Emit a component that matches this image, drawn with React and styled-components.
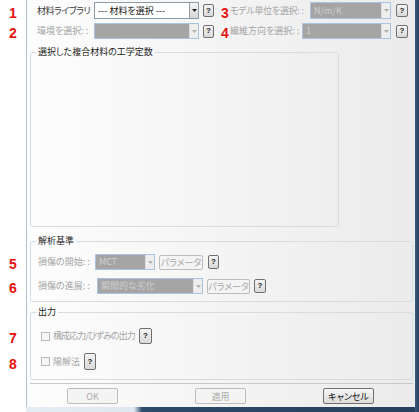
import styled, { createGlobalStyle } from "styled-components"

const EstiloGlobal = createGlobalStyle`
  html, body {
    margin: 0;
    padding: 0;
    background: #ffffff;
  }
  body {
    width: 419px;
    height: 412px;
    overflow: hidden;
    font-family: "Noto Sans CJK JP", "Noto Sans", sans-serif;
    font-size: 9px;
    font-feature-settings: "palt";
    color: #1e1e1e;
  }
`

const Tela = styled.div`
  display: flex;
  width: 419px;
  height: 412px;
`
// Margem branca onde ficam os números vermelhos
const Margem = styled.div`
  flex: none;
  width: 26px;
  background: #ffffff;
`
const Janela = styled.div`
  flex: none;
  width: 389px;
  display: flex;
  flex-direction: column;
`
const Dialogo = styled.div`
  flex: 1;
  display: flex;
  flex-direction: column;
  border-left: 1px solid #b4c3d2;
  background: linear-gradient(to right, #fdfdfd, #ebebeb);
`
const BordaInferior = styled.div`
  height: 5px;
  background: linear-gradient(to right, #e4ecf4 0, #dfe8f1 108px, #2d4a6b 116px, #27405e 100%);
`
const BordaDireita = styled.div`
  flex: none;
  width: 4px;
  background: linear-gradient(to right, #3b5a7e, #27405e);
`

// Linhas do topo e dos grupos
const Linha = styled.div`
  position: relative;
  display: flex;
  align-items: center;
  height: ${p => p.$altura || 17}px;
  margin-top: ${p => p.$mt || 0}px;
  padding-left: ${p => p.$pl || 0}px;
  padding-right: ${p => p.$pr || 0}px;
`
const Marcador = styled.span`
  color: #e8110f;
  font-family: "Liberation Sans", Arial, sans-serif;
  font-weight: bold;
  font-size: 14px;
  line-height: 14px;
  ${p => p.$fora
    ? `position: absolute; left: ${p.$left}px; top: 50%; transform: translateY(-50%); margin-top: 2px;`
    : `margin-left: ${p.$ml || 0}px; margin-top: 4px; width: 8px;`}
`
const Rotulo = styled.span`
  flex: ${p => (p.$flex ? 1 : "none")};
  width: ${p => (p.$largura ? `${p.$largura}px` : "auto")};
  margin-left: ${p => p.$ml || 0}px;
  letter-spacing: ${p => p.$espaco || 0}px;
  color: ${p => (p.$desabilitado ? "#a4a4a4" : "#3a3a3a")};
  white-space: nowrap;
  overflow: hidden;
  line-height: 12px;
`
const Combo = styled.div`
  flex: none;
  display: flex;
  box-sizing: border-box;
  width: ${p => p.$largura}px;
  height: ${p => p.$altura || 17}px;
  border: 1px solid ${p => (p.$desabilitado ? "#a9c4e2" : "#8e9aa6")};
  background: ${p => (p.$desabilitado ? "#a5a5a5" : "#ffffff")};
`
const TextoCombo = styled.span`
  flex: 1;
  padding-left: 3px;
  line-height: ${p => (p.$altura || 17) - 2}px;
  white-space: nowrap;
  overflow: hidden;
  color: ${p => (p.$desabilitado ? "#cfcfcf" : "#1a1a1a")};
`
const Seta = styled.span`
  flex: none;
  width: 8px;
  display: flex;
  align-items: center;
  justify-content: center;
  border-left: 1px solid ${p => (p.$desabilitado ? "#d8dde2" : "#9a9a9a")};
  background: ${p => (p.$desabilitado ? "#eeeeee" : "linear-gradient(#f4f4f4, #d6d6d6)")};
`
const Ajuda = styled.button`
  flex: none;
  box-sizing: border-box;
  width: ${p => p.$largura || 11}px;
  height: ${p => p.$altura || 14}px;
  margin: 0 0 0 ${p => p.$ml || 0}px;
  padding: 0;
  border: 1px solid #707070;
  border-radius: 2px;
  background: linear-gradient(#f4f4f4, #d9d9d9);
  font-family: "Liberation Sans", Arial, sans-serif;
  font-weight: bold;
  font-size: 8px;
  color: #222;
  line-height: 1;
`
const Botao = styled.button`
  flex: none;
  box-sizing: border-box;
  width: ${p => p.$largura || 51}px;
  height: ${p => p.$altura || 16}px;
  margin: 0 0 0 ${p => p.$ml || 0}px;
  padding: 0;
  border: 1px solid ${p => (p.$desabilitado ? "#bdbdbd" : "#707070")};
  border-radius: 2px;
  background: ${p => (p.$desabilitado ? "#f4f4f4" : "linear-gradient(#f6f6f6, #dcdcdc)")};
  color: ${p => (p.$desabilitado ? "#a9a9a9" : "#111")};
  font-family: "Noto Sans CJK JP", "Noto Sans", sans-serif;
  font-feature-settings: "palt";
  font-size: 9px;
  line-height: 1;
  white-space: nowrap;
  overflow: hidden;
`

// Caixas de grupo
const Grupo = styled.fieldset`
  box-sizing: border-box;
  width: ${p => p.$largura}px;
  height: ${p => p.$altura}px;
  margin: ${p => p.$mt}px 0 0 3px;
  padding: ${p => p.$pt || 0}px 0 0 7px;
  border: 1px solid #d5dde4;
  border-radius: 3px;
`
const Titulo = styled.legend`
  margin-left: -2px;
  padding: 0 2px;
  line-height: 12px;
  color: #1e1e1e;
`
const Caixa = styled.span`
  flex: none;
  box-sizing: border-box;
  width: 9px;
  height: 9px;
  margin-left: 3px;
  border: 1px solid #b9b9b9;
  background: #f5f5f5;
`
const Separador = styled.div`
  height: 1px;
  margin: 3px 2px 0 3px;
  background: #c8c8c8;
`
const Rodape = styled.div`
  display: flex;
  gap: 77px;
  margin-top: 4px;
  padding-left: 40px;
`

function SetaCombo({ desabilitado }) {
  return (
    <Seta $desabilitado={desabilitado}>
      <svg width="5" height="3" viewBox="0 0 5 3">
        <path d="M0 0h5L2.5 3z" fill={desabilitado ? "#b0b0b0" : "#222"} />
      </svg>
    </Seta>
  )
}

function CaixaCombo({ texto, largura, altura, desabilitado }) {
  return (
    <Combo $largura={largura} $altura={altura} $desabilitado={desabilitado}>
      <TextoCombo $altura={altura} $desabilitado={desabilitado}>{texto}</TextoCombo>
      <SetaCombo desabilitado={desabilitado} />
    </Combo>
  )
}

export default function App() {
  return (
    <Tela>
      <EstiloGlobal />
      <Margem />
      <Janela>
        <Dialogo>
          <Linha $mt={2} $pl={10} $pr={7}>
            <Marcador $fora $left={-18}>1</Marcador>
            <Rotulo $largura={57} $espaco={-0.5}>材料ライブラリ</Rotulo>
            <CaixaCombo texto="--- 材料を選択 ---" largura={105} />
            <Ajuda $ml={4} $altura={13}>?</Ajuda>
            <Marcador $ml={7}>3</Marcador>
            <Rotulo $flex $desabilitado $ml={1} $espaco={-0.3}>モデル単位を選択: :</Rotulo>
            <CaixaCombo texto="N/m/K" largura={81} desabilitado />
            <Ajuda $ml={5} $largura={12} $altura={13}>?</Ajuda>
          </Linha>
          <Linha $mt={4} $altura={16} $pl={10} $pr={7}>
            <Marcador $fora $left={-18}>2</Marcador>
            <Rotulo $largura={57} $desabilitado>環境を選択: :</Rotulo>
            <CaixaCombo texto="" largura={105} altura={16} desabilitado />
            <Ajuda $ml={4} $altura={13}>?</Ajuda>
            <Marcador $ml={7}>4</Marcador>
            <Rotulo $flex $desabilitado $ml={1}>繊維方向を選択: :</Rotulo>
            <CaixaCombo texto="1" largura={89} altura={16} desabilitado />
            <Ajuda $ml={5} $largura={12} $altura={13}>?</Ajuda>
          </Linha>

          <Grupo $largura={309} $altura={181} $mt={7}>
            <Titulo>選択した複合材料の工学定数</Titulo>
          </Grupo>

          <Grupo $largura={383} $altura={67} $mt={8} $pt={7}>
            <Titulo>解析基準</Titulo>
            <Linha $altura={16}>
              <Marcador $fora $left={-29}>5</Marcador>
              <Rotulo $largura={57} $desabilitado>損傷の開始: :</Rotulo>
              <CaixaCombo texto="MCT" largura={60} altura={16} desabilitado />
              <Botao $ml={4} $largura={44} $altura={15} $desabilitado>パラメータ</Botao>
              <Ajuda $ml={5}>?</Ajuda>
            </Linha>
            <Linha $altura={16} $mt={8}>
              <Marcador $fora $left={-29}>6</Marcador>
              <Rotulo $largura={59} $desabilitado>損傷の進展: :</Rotulo>
              <CaixaCombo texto="瞬間的な劣化" largura={106} altura={16} desabilitado />
              <Botao $ml={4} $largura={43} $altura={15} $desabilitado>パラメータ</Botao>
              <Ajuda $ml={4} $largura={12}>?</Ajuda>
            </Linha>
          </Grupo>

          <Grupo $largura={383} $altura={74} $mt={4} $pt={10}>
            <Titulo>出力</Titulo>
            <Linha $altura={16}>
              <Marcador $fora $left={-29}>7</Marcador>
              <Caixa />
              <Rotulo $ml={3} $desabilitado $espaco={-0.9}>構成応力/ひずみの出力</Rotulo>
              <Ajuda $ml={4} $largura={13} $altura={16}>?</Ajuda>
            </Linha>
            <Linha $altura={17} $mt={9}>
              <Marcador $fora $left={-29}>8</Marcador>
              <Caixa />
              <Rotulo $ml={3} $desabilitado>陽解法</Rotulo>
              <Ajuda $ml={4} $largura={12} $altura={17}>?</Ajuda>
            </Linha>
          </Grupo>

          <Separador />
          <Rodape>
            <Botao $desabilitado>OK</Botao>
            <Botao $desabilitado>適用</Botao>
            <Botao>キャンセル</Botao>
          </Rodape>
        </Dialogo>
        <BordaInferior />
      </Janela>
      <BordaDireita />
    </Tela>
  )
}
